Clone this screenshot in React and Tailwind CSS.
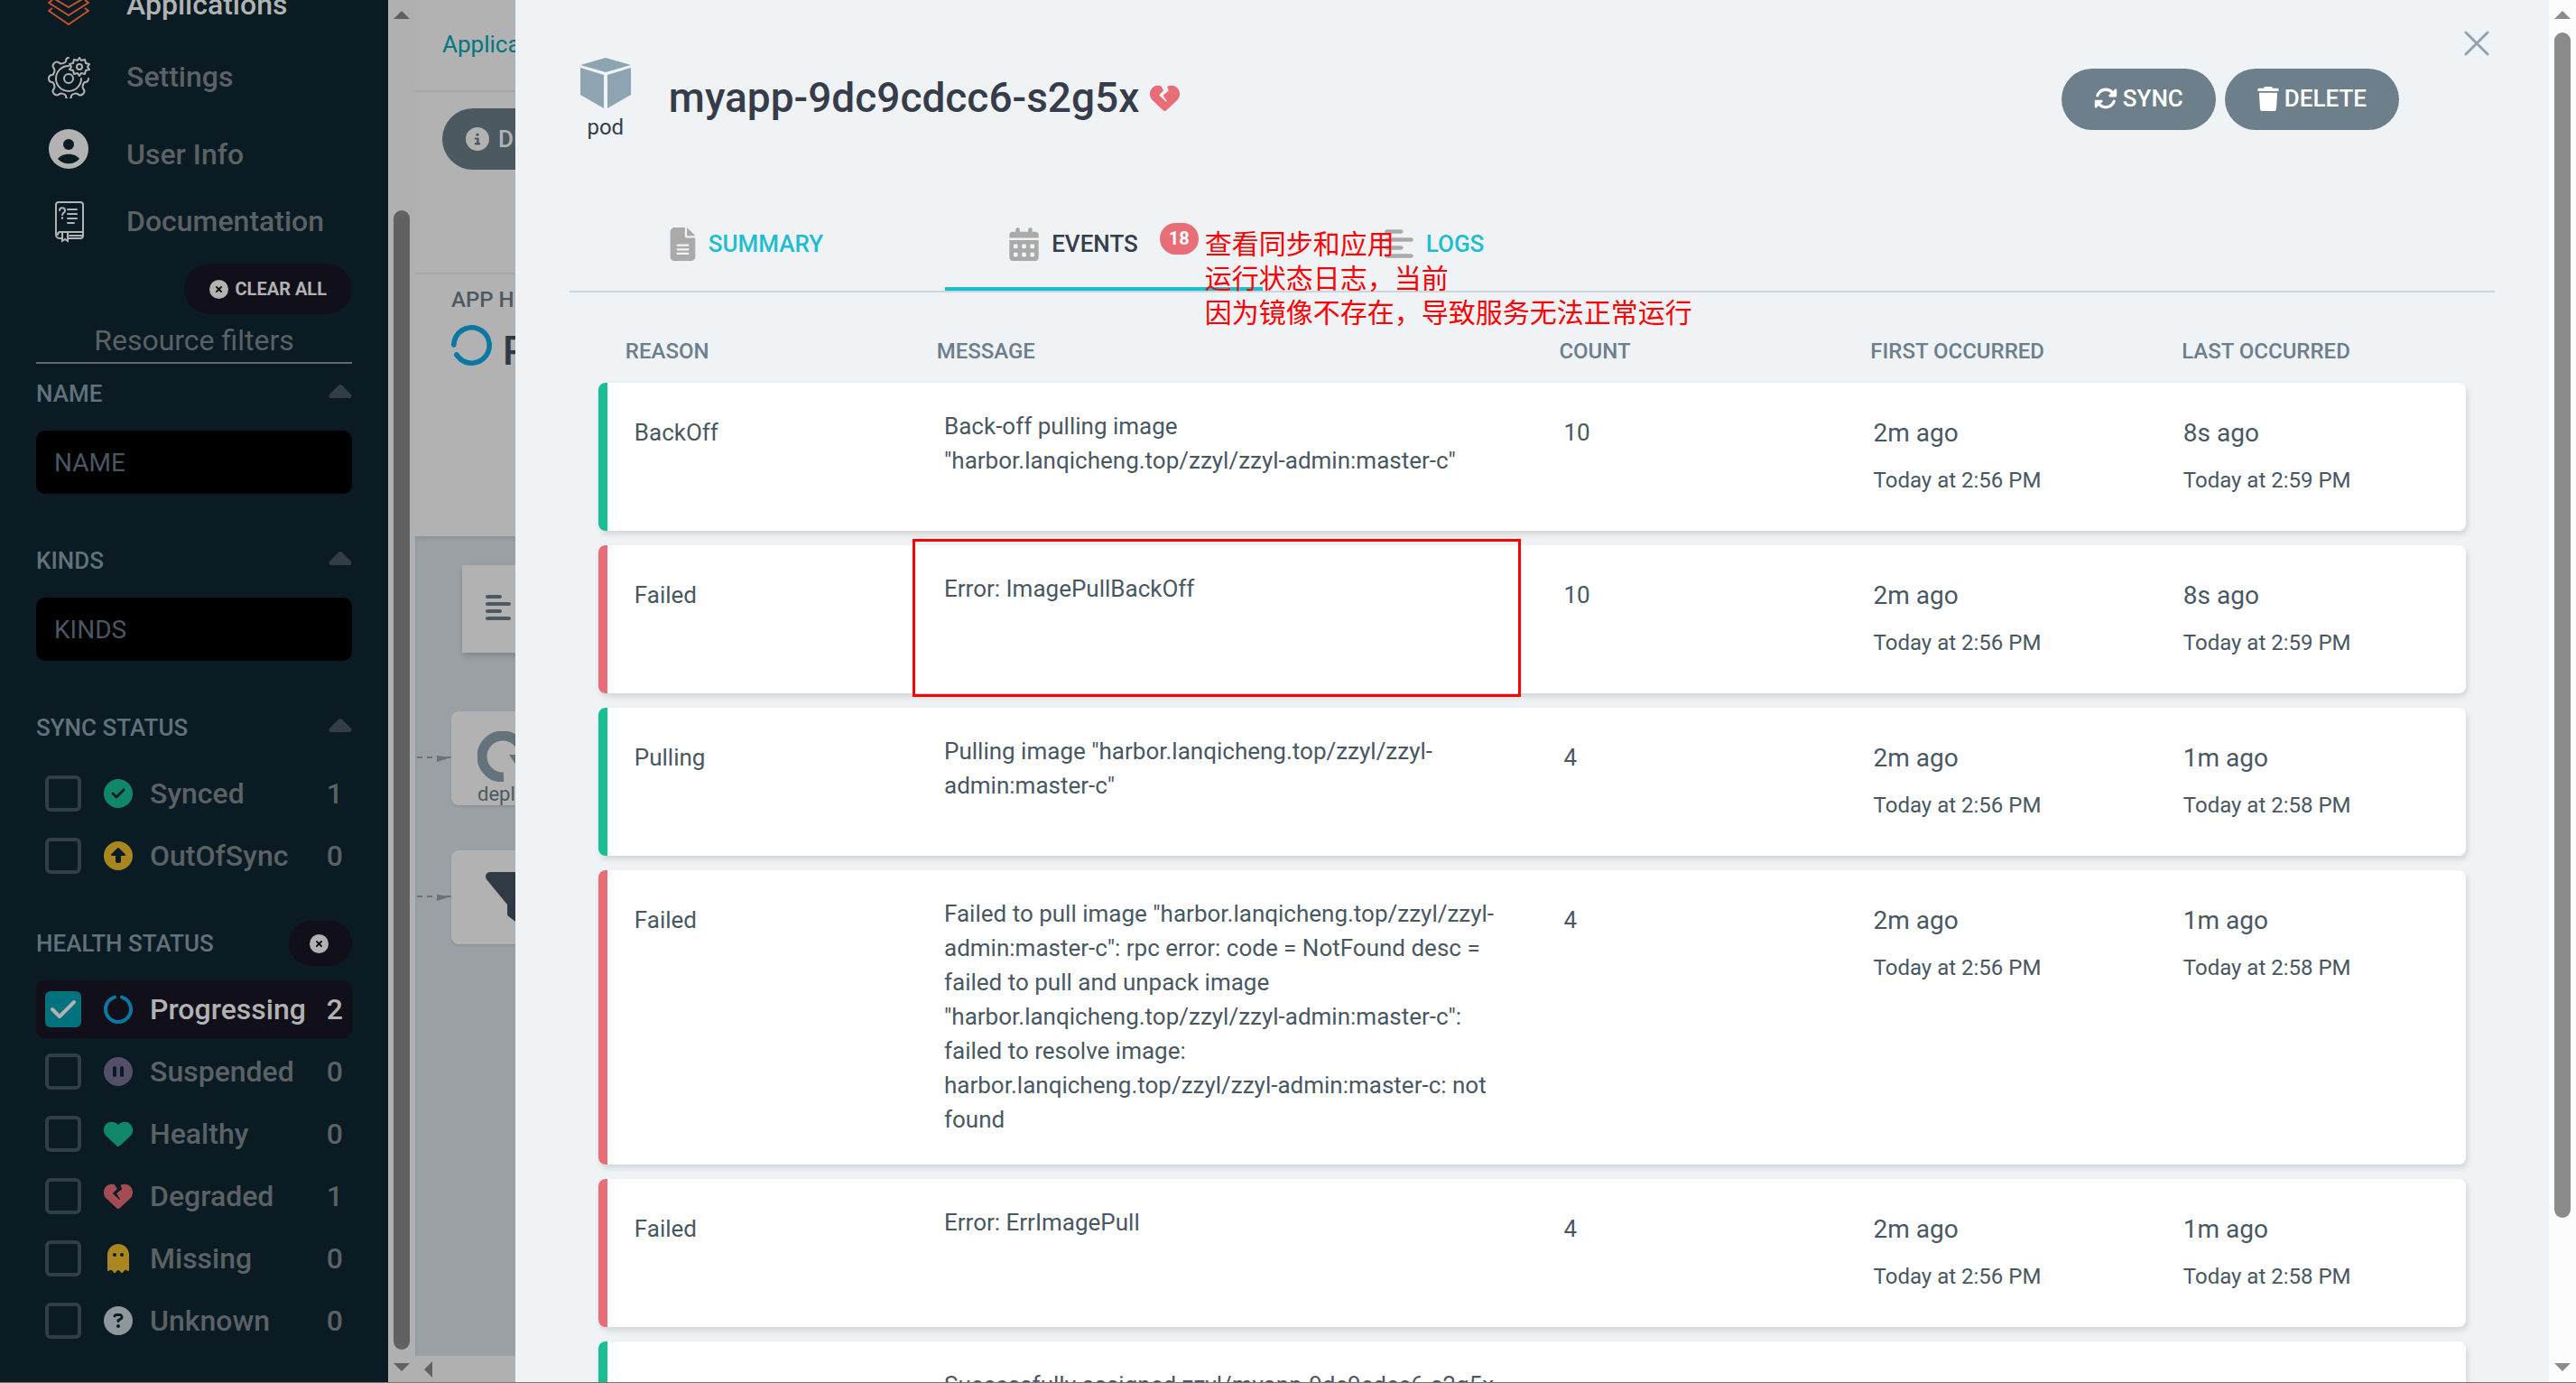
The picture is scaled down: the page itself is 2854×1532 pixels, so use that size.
import React, { useState } from "react";
import {
  FaAlignLeft,
  FaCalendarDays,
  FaCaretUp,
  FaCheck,
  FaCircleCheck,
  FaCircleInfo,
  FaCircleNotch,
  FaCirclePause,
  FaCircleQuestion,
  FaCircleUp,
  FaCircleXmark,
  FaFileLines,
  FaFilter,
  FaGhost,
  FaHeart,
  FaHeartCrack,
  FaRotate,
  FaTrash,
} from "react-icons/fa6";

/* ---------------------- DATA ---------------------- */
const syncFilters = [
  { label: "Synced", count: 1, icon: FaCircleCheck, color: "text-[#118769]" },
  { label: "OutOfSync", count: 0, icon: FaCircleUp, color: "text-[#aa8621]" },
];

const healthFilters = [
  { label: "Progressing", count: 2, icon: FaCircleNotch, color: "text-[#0979a4]" },
  { label: "Suspended", count: 0, icon: FaCirclePause, color: "text-[#534f69]" },
  { label: "Healthy", count: 0, icon: FaHeart, color: "text-[#118769]" },
  { label: "Degraded", count: 1, icon: FaHeartCrack, color: "text-[#a34c53]" },
  { label: "Missing", count: 0, icon: FaGhost, color: "text-[#aa8621]" },
  { label: "Unknown", count: 0, icon: FaCircleQuestion, color: "text-[#8f979c]" },
];

const events = [
  {
    reason: "BackOff",
    message: 'Back-off pulling image "harbor.lanqicheng.top/zzyl/zzyl-admin:master-c"',
    count: 10,
    first: ["2m ago", "Today at 2:56 PM"],
    last: ["8s ago", "Today at 2:59 PM"],
    ok: true,
  },
  {
    reason: "Failed",
    message: "Error: ImagePullBackOff",
    count: 10,
    first: ["2m ago", "Today at 2:56 PM"],
    last: ["8s ago", "Today at 2:59 PM"],
    ok: false,
    marked: true,
  },
  {
    reason: "Pulling",
    message: 'Pulling image "harbor.lanqicheng.top/zzyl/zzyl-admin:master-c"',
    count: 4,
    first: ["2m ago", "Today at 2:56 PM"],
    last: ["1m ago", "Today at 2:58 PM"],
    ok: true,
  },
  {
    reason: "Failed",
    message:
      'Failed to pull image "harbor.lanqicheng.top/zzyl/zzyl-admin:master-c": rpc error: code = NotFound desc = failed to pull and unpack image "harbor.lanqicheng.top/zzyl/zzyl-admin:master-c": failed to resolve image: harbor.lanqicheng.top/zzyl/zzyl-admin:master-c: not found',
    count: 4,
    first: ["2m ago", "Today at 2:56 PM"],
    last: ["1m ago", "Today at 2:58 PM"],
    ok: false,
  },
  {
    reason: "Failed",
    message: "Error: ErrImagePull",
    count: 4,
    first: ["2m ago", "Today at 2:56 PM"],
    last: ["1m ago", "Today at 2:58 PM"],
    ok: false,
  },
  {
    reason: "Scheduled",
    message: "Successfully assigned zzyl/myapp-9dc9cdcc6-s2g5x",
    ok: true,
  },
];

/* ---------------------- ICONS ---------------------- */
const StackIcon = () => (
  <svg viewBox="0 0 48 48" className="w-12 h-12" fill="none" stroke="#c4562c" strokeWidth="2" strokeLinejoin="round">
    <path d="M24 2 46 14 24 27 2 14z" />
    <path d="M6 19 2 22 24 36 46 22 42 19" />
    <path d="M6 28 2 31 24 46 46 31 42 28" />
  </svg>
);

// big gear left open at the top right, where the small one sits
const GearsIcon = () => (
  <svg viewBox="0 0 48 48" className="w-12 h-12" fill="none" stroke="#b2b2b2" strokeWidth="2" strokeLinecap="round" strokeLinejoin="round">
    <path d="M24 3c-3 0-3 2-3 4-1 2-5 3-7 2-2-2-4-2-6 0s-2 4 0 6c1 2 0 6-2 7-3 0-4 1-4 4s1 4 4 4c2 1 3 5 2 7-2 2-2 4 0 6s4 2 6 0c2-1 6 0 7 2 0 3 1 4 3 4s3-1 3-4c1-2 5-3 7-2 2 2 4 2 6 0s2-4 0-6c-1-2 0-6 2-7 3 0 4-1 4-4" />
    <path d="M24 12a14 14 0 1 0 14 14" />
    <circle cx="24" cy="26" r="5" />
    <circle cx="36" cy="13" r="3" />
    <path d="M36 3l2 3 4-1 1 4 4 1-2 3 2 3-4 1-1 4-4-1-2 3-2-3-4 1-1-4-4-1 2-3-2-3 4-1 1-4 4 1z" />
  </svg>
);

const UserIcon = () => (
  <svg viewBox="0 0 48 48" className="w-12 h-12 mb-3">
    <circle cx="24" cy="24" r="22" fill="#b2b2b2" />
    <circle cx="24" cy="19" r="6" fill="#0a1b23" />
    <path d="M12 35c5-7 19-7 24 0-6 7-18 7-24 0z" fill="#0a1b23" />
  </svg>
);

const BookIcon = () => (
  <svg viewBox="0 0 48 48" className="w-12 h-12" fill="none" stroke="#b2b2b2" strokeWidth="2" strokeLinecap="round">
    <path d="M16 43h-2a4 4 0 0 1-4-4V6a3 3 0 0 1 3-3h24a3 3 0 0 1 3 3v34a3 3 0 0 1-3 3H23" />
    <path d="M40 36H14a3 3 0 0 0-2 3M25 40h14M17 37v9l3-2 3 2v-9" />
    <path d="M14 12a3 3 0 1 1 4 3l-1 2M17 20v1M23 11h10M23 16h10M23 21h10M23 26h7" />
  </svg>
);

const PodIcon = () => (
  <svg viewBox="0 0 58 56" className="w-[58px] h-14" fill="#8fa4b1">
    <path d="M29 0 57 8 29 16 1 8z" />
    <path d="M1 11 27 19V56L1 41z" />
    <path d="M57 11 31 19V56L57 41z" />
  </svg>
);

const Triangle = ({ className, points }) => (
  <svg viewBox="0 0 18 18" className={className} fill="currentColor">
    <polygon points={points} />
  </svg>
);

/* ---------------------- SCROLL BAR ---------------------- */
const ScrollBar = ({ className, thumb, align }) => (
  <div className={`w-[30px] shrink-0 flex flex-col items-center py-2 ${className}`}>
    <Triangle className="w-[18px] h-[18px]" points="0,13 9,4 18,13" />
    <div className={`flex-1 min-h-0 pt-2.5 pb-2.5 flex flex-col ${align}`}>
      <div className={`w-[18px] rounded-full bg-current ${thumb}`} />
    </div>
    <Triangle className="w-[18px] h-[18px]" points="0,5 9,14 18,5" />
  </div>
);

/* ---------------------- SIDEBAR ---------------------- */
const NavItem = ({ icon: Icon, label, active, className }) => (
  <a href="#" className={`flex items-center gap-[40px] pl-3 ${className}`}>
    <Icon />
    <span className={active ? "text-[#b2b2b2]" : ""}>{label}</span>
  </a>
);

const GroupTitle = ({ children }) => (
  <div className="flex items-center justify-between text-[26px] leading-[40px] font-medium text-[#61727c]">
    <h3>{children}</h3>
    <FaCaretUp className="w-[26px] h-10 text-[#323d47]" />
  </div>
);

const FilterRow = ({ item, checked, onChange }) => {
  const Icon = item.icon;
  return (
    <label
      className={`h-16 px-2.5 rounded-[10px] flex items-center text-[32px] font-medium ${
        checked ? "bg-[#11101a] text-[#b2b2b2]" : ""
      }`}
    >
      <input type="checkbox" checked={checked} onChange={onChange} className="sr-only" />
      <span
        className={`w-10 h-10 mr-[25px] rounded-md flex items-center justify-center ${
          checked ? "bg-[#00727e]" : "border-4 border-[#323d47]"
        }`}
      >
        {checked && <FaCheck className="w-7 h-8" />}
      </span>
      <Icon className={`w-8 h-8 mr-[19px] ${item.color}`} />
      <span className="flex-1">{item.label}</span>
      <span>{item.count}</span>
    </label>
  );
};

const Sidebar = () => {
  const [selected, setSelected] = useState(["Progressing"]);

  const toggle = (label) =>
    setSelected((prev) =>
      prev.includes(label) ? prev.filter((l) => l !== label) : [...prev, label]
    );

  return (
    <aside className="w-[430px] shrink-0 overflow-hidden bg-[#0a1b23] text-[#5b6165] px-10">
      <nav className="text-[32px] leading-[48px] font-medium">
        <NavItem icon={StackIcon} label="Applications" active className="-mt-[19px]" />
        <NavItem icon={GearsIcon} label="Settings" className="mt-8" />
        <NavItem icon={UserIcon} label="User Info" className="mt-8" />
        <NavItem icon={BookIcon} label="Documentation" className="mt-5" />
      </nav>

      <div className="flex justify-end mt-[23px]">
        <button className="h-14 px-7 rounded-full bg-[#11101a] text-[#b2b2b2] text-xl font-bold flex items-center gap-2">
          <FaCircleXmark className="w-[21px] h-[21px]" />
          CLEAR ALL
        </button>
      </div>
      <h2 className="text-[32px] leading-[48px] pt-[5px] text-center border-b-2 border-[#63696d]">
        Resource filters
      </h2>

      {["NAME", "KINDS"].map((name) => (
        <section key={name} className="mt-[13px] mb-[54px]">
          <GroupTitle>{name}</GroupTitle>
          <input
            aria-label={name}
            placeholder={name}
            className="mt-[21px] w-full h-[70px] px-5 rounded-[10px] bg-black text-[28px] placeholder:text-[#4a5762]"
          />
        </section>
      ))}

      <section>
        <GroupTitle>SYNC STATUS</GroupTitle>
        <div className="mt-[21px] flex flex-col gap-[5px]">
          {syncFilters.map((item) => (
            <FilterRow
              key={item.label}
              item={item}
              checked={selected.includes(item.label)}
              onChange={() => toggle(item.label)}
            />
          ))}
        </div>
      </section>

      <section className="mt-10">
        <div className="flex items-center justify-between text-[26px] font-medium text-[#61727c]">
          <h3>HEALTH STATUS</h3>
          <button
            aria-label="Clear health filters"
            onClick={() => setSelected([])}
            className="w-[70px] h-[50px] pr-1 rounded-full bg-[#11101a] text-[#b2b2b2] flex items-center justify-center"
          >
            <FaCircleXmark className="w-[21px] h-[21px]" />
          </button>
        </div>
        <div className="mt-4 flex flex-col gap-[5px]">
          {healthFilters.map((item) => (
            <FilterRow
              key={item.label}
              item={item}
              checked={selected.includes(item.label)}
              onChange={() => toggle(item.label)}
            />
          ))}
        </div>
      </section>
    </aside>
  );
};

/* ---------------------- APPLICATION PAGE ---------------------- */
const Edge = () => (
  <svg viewBox="0 0 40 16" className="w-10 h-4 shrink-0">
    <path d="M2 7h38" stroke="#64727b" strokeWidth="2" strokeDasharray="6 5" />
    <path d="M24 5 40 7 24 12z" fill="#707070" />
  </svg>
);

const ApplicationPage = () => (
  <main className="flex-1 min-w-0 overflow-hidden flex flex-col bg-[#b2b2b2] text-[#4c5961] whitespace-nowrap">
    <div className="h-[102px] px-[30px] pb-0.5 flex items-center border-b-2 border-[#a1a8ab]">
      <a href="#" className="text-[26px] text-[#007681]">Applications</a>
    </div>
    <div className="h-[202px] pt-[18px] px-[30px] border-b-2 border-[#a1a8ab]">
      <button className="h-[68px] px-[26px] rounded-full bg-[#4c5961] text-[#b2b2b2] text-[26px] font-medium flex items-center gap-2.5">
        <FaCircleInfo className="w-[26px] h-[26px]" />
        DETAILS
      </button>
    </div>
    <div className="h-[290px] px-10 pt-3">
      <h4 className="text-2xl leading-[32px] font-medium">APP HEALTH</h4>
      <div className="mt-3 flex gap-3 text-[44px] leading-[58px] text-[#2f3a44] font-medium">
        <FaCircleNotch className="w-[45px] h-[45px] -rotate-[105deg] text-[#0979a4]" />
        Progressing
      </div>
    </div>
    <div className="flex-1 bg-[#9ba0a4] shadow-[inset_0_3px_4px_#8d9498]">
      <div className="ml-[52px] mt-8 h-[97px] w-[400px] px-[26px] pb-1 flex items-center bg-[#b2b2b2] shadow-[1px_3px_6px_#7d8488]">
        <FaAlignLeft className="w-7 h-8 text-[#4c5961]" />
      </div>
      <div className="mt-[65px] flex items-center">
        <Edge />
        <div className="w-[360px] h-[104px] px-[29px] pt-[22px] rounded-lg bg-[#b2b2b2] shadow-[0_2px_2px_#8d9498]">
          <svg viewBox="0 0 56 56" className="w-14 h-14" fill="none">
            <path d="M29 51A23 23 0 1 1 51 28" stroke="#64727b" strokeWidth="11" />
            <path d="M35 26h21L46 42z" fill="#64727b" />
          </svg>
          <p className="text-[22px] leading-[28px]">deploy</p>
        </div>
      </div>
      <div className="mt-[50px] flex items-center">
        <Edge />
        <div className="w-[360px] h-[104px] px-[38px] flex items-center rounded-lg bg-[#b2b2b2] shadow-[0_2px_2px_#8d9498]">
          <FaFilter className="w-16 h-16 text-[#2f3a44]" />
        </div>
      </div>
    </div>
    <div className="h-[29px] px-2 flex items-center bg-[#b0b0b0] text-[#616161]">
      <Triangle className="w-[18px] h-[18px]" points="11,0 2,9 11,18" />
    </div>
  </main>
);

/* ---------------------- EVENTS ---------------------- */
const Occurred = ({ value = [] }) => (
  <td className="col-span-2 px-[30px]">
    <div className="h-[54px] text-[28px] leading-[54px]">{value[0]}</div>
    <div className="h-[50px] text-2xl leading-[50px]">{value[1]}</div>
  </td>
);

const EventsTable = () => (
  <table className="block mx-8 text-[#495763]">
    <thead className="block">
      <tr className="grid grid-cols-12 text-left text-2xl leading-[36px] text-[#6d7f8b] pt-[47px] pb-[17px]">
        <th className="col-span-2 px-[30px] font-medium">REASON</th>
        <th className="col-span-4 px-[30px] font-medium">MESSAGE</th>
        <th className="col-span-2 px-[30px] font-medium">COUNT</th>
        <th className="col-span-2 px-[30px] font-medium">FIRST OCCURRED</th>
        <th className="col-span-2 px-[30px] font-medium">LAST OCCURRED</th>
      </tr>
    </thead>
    <tbody className="flex flex-col gap-4">
      {events.map((event, i) => (
        <tr
          key={i}
          className={`grid grid-cols-12 pt-[29px] pb-[31px] bg-white rounded-lg border-l-[10px] text-[26px] leading-[52px] shadow-[2px_4px_6px_rgba(0,0,0,0.12)] ${
            event.ok ? "border-[#18be94]" : "border-[#e96d76]"
          }`}
        >
          <td className="col-span-2 px-[30px]">{event.reason}</td>
          <td className="relative col-span-4 px-[30px] leading-[38px]">
            {event.message}
            {event.marked && (
              <span className="absolute -top-9 -bottom-[35px] -left-[5px] right-[17px] border-[3px] border-[#ff0000]" />
            )}
          </td>
          <td className="col-span-2 px-[30px]">{event.count}</td>
          <Occurred value={event.first} />
          <Occurred value={event.last} />
        </tr>
      ))}
    </tbody>
  </table>
);

/* ---------------------- POD PANEL ---------------------- */
const PodPanel = () => (
  <section className="absolute inset-y-0 right-0 w-4/5 flex bg-[#eff3f6] text-[#363c4a]">
    <div className="relative flex-1 min-w-0 overflow-hidden px-[60px]">
      <button aria-label="Close" className="absolute top-[34px] right-[66px]">
        <svg viewBox="0 0 28 28" className="w-7 h-7" stroke="#8fa4b1" strokeWidth="3" strokeLinecap="round">
          <path d="M2 2 26 26M26 2 2 26" />
        </svg>
      </button>

      <header className="flex pt-16">
        <div className="w-20 flex flex-col items-center">
          <PodIcon />
          <span className="mt-[5px] text-2xl leading-[32px]">pod</span>
        </div>
        <h1 className="ml-[30px] flex items-center gap-3 h-[88px] text-[46px] font-medium">
          myapp-9dc9cdcc6-s2g5x
          <FaHeartCrack className="w-[33px] h-[33px] text-[#e96d76]" />
        </h1>
        <div className="ml-auto mr-[106px] mt-3 h-[68px] flex gap-2.5 text-[26px] font-medium text-white">
          <button className="px-9 pb-0.5 rounded-full bg-[#6d7f8b] flex items-center gap-1.5">
            <FaRotate className="w-[26px] h-[26px]" />
            SYNC
          </button>
          <button className="px-9 pb-0.5 rounded-full bg-[#6d7f8b] flex items-center gap-1.5">
            <FaTrash className="w-6 h-[27px]" />
            DELETE
          </button>
        </div>
      </header>

      <nav className="relative mt-[61px] pl-10 flex items-stretch gap-16 h-[106px] border-b-2 border-[#ccd6dd] text-[26px] font-medium text-[#1fbdd0]">
        <a href="#" className="px-[71px] pt-1 flex items-center gap-3.5 border-b-4 border-transparent">
          <FaFileLines className="w-[29px] h-[37px] text-[#aaaaaa]" />
          SUMMARY
        </a>
        <a href="#" className="px-[71px] pt-1 flex items-center gap-3.5 border-b-4 border-[#1fbdd0] text-[#363c4a]">
          <FaCalendarDays className="w-[33px] h-[37px] text-[#aaaaaa]" />
          EVENTS
          <span className="ml-2.5 mb-3 w-[43px] h-[35px] rounded-full bg-[#e96d76] text-white text-xl leading-[35px] font-bold text-center">
            18
          </span>
        </a>
        <a href="#" className="px-[71px] pt-1 flex items-center gap-3.5 border-b-4 border-transparent">
          <FaAlignLeft className="w-8 h-9 text-[#aaaaaa]" />
          LOGS
        </a>
        <p className="absolute top-[31px] left-[704px] whitespace-nowrap font-['Noto_Sans_CJK_SC',sans-serif] text-[30px] leading-[38px] font-normal text-[#ff0000]">
          查看同步和应用
          <br />
          运行状态日志，当前
          <br />
          因为镜像不存在，导致服务无法正常运行
        </p>
      </nav>

      <EventsTable />
    </div>
    <ScrollBar className="bg-[#fcfcfc] text-[#8b8b8b]" align="justify-start" thumb="h-[90%]" />
  </section>
);

const App = () => (
  <div className="relative h-screen overflow-hidden flex border-b border-[#777777] font-['Roboto',sans-serif]">
    <Sidebar />
    <ScrollBar className="bg-[#b0b0b0] text-[#616161]" align="justify-end" thumb="h-[86.5%]" />
    <ApplicationPage />
    <PodPanel />
  </div>
);

export default App;
